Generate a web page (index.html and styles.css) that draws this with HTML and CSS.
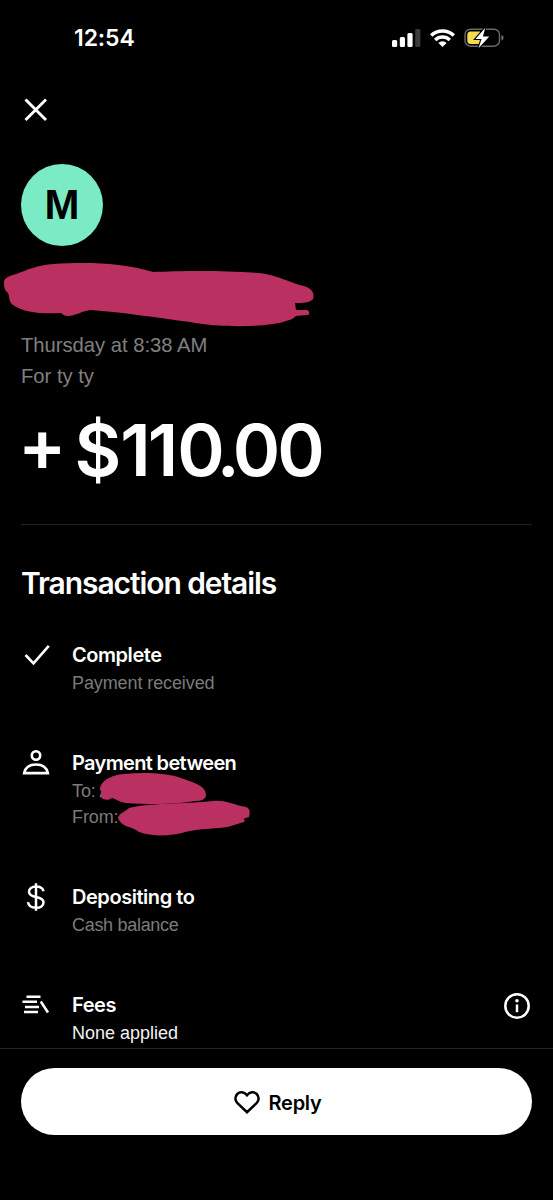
FILE: index.html
```html
<!DOCTYPE html>
<html lang="en">
<head>
<meta charset="utf-8">
<title>Transaction details</title>
<link rel="stylesheet" href="styles.css">
</head>
<body>
<div class="screen">
  <header class="status">
    <span class="time">12:54</span>
    <div class="indicators">
      <svg class="signal" width="29" height="18" viewBox="0 0 29 18"><rect x="0" y="11" width="5.2" height="7" rx="1.5" fill="#fff"/><rect x="7.8" y="8" width="5.2" height="10" rx="1.5" fill="#fff"/><rect x="15.4" y="4" width="5.2" height="14" rx="1.5" fill="#fff"/><rect x="23.2" y="0" width="5.2" height="18" rx="1.5" fill="#3b3b3b"/></svg>
      <svg class="wifi" width="25" height="18" viewBox="0 0 25 18" fill="none" stroke="#fff" stroke-width="3.5"><path d="M1.2 6.5a16.3 16.3 0 0 1 22.6 0M5.2 11a10.6 10.6 0 0 1 14.6 0"/><path d="M12.5 18 8.400 14a5.8 5.8 0 0 1 8.200 0z" fill="#fff" stroke="none"/></svg>
      <svg class="battery" width="40" height="22" viewBox="0 0 40 22"><rect x="1" y="2.2" width="34.5" height="17" rx="5.5" fill="none" stroke="#6b6b6b" stroke-width="1.4"/><path d="M37.5 8v5.600q2-.6 2-2.800t-2-2.800z" fill="#777"/><path d="M6.500 4.500H16V17H6.500Q3.300 17 3.300 13.500V8Q3.300 4.500 6.500 4.500z" fill="#f9d94e"/><path d="M21.300 .8 11.500 12h6l-3 9.200L25.300 9.400h-6.400z" fill="#fff" stroke="#000" stroke-width="2.200" paint-order="stroke"/></svg>
    </div>
  </header>

  <main class="content">
    <svg class="close" width="24" height="24" viewBox="0 0 24 24" fill="none" stroke="#fff" stroke-width="2.900"><path d="M1.500 1.500 22 22M22 1.500 1.500 22"/></svg>
    <div class="avatar">M</div>
    <svg class="redacted-name" width="314" height="65" viewBox="0 0 314 65" fill="#b93061"><path d="M4 21C3 15 9 13 16 11C27 7 37 2 54 1C83-1 122-1 153 9C178 8 220 7 259 10C278 12 290 20 304 23C312 25 315 31 313 36C310 40 303 40 295 40L296 47H307C310 48 310 52 307 52L296 53C292 57 289 57 283 59C267 64 218 65 190 59C153 54 119 49 91 47C82 48 75 53 68 53C65 53 63 52 61 50C41 51 25 50 13 42C8 38 10 34 8 30C5 28 4 24 4 21Z"/></svg>
    <p class="meta date">Thursday at 8:38 AM</p>
    <p class="meta note">For ty ty</p>
    <p class="amount"><span class="plus">+</span><span class="dollar">$</span><span class="ones">11</span><span class="zero">0</span><span class="dot">.</span><span class="zeros">00</span></p>

    <section class="details">
      <h1 class="heading">Transaction details</h1>
      <div class="rows">
        <div class="row">
          <svg class="icon" width="32" height="32" viewBox="0 0 32 32" fill="none" stroke="#fff" stroke-width="2.600"><path d="M5.500 15 13.500 23.400 28.800 5.800"/></svg>
          <div><h2 class="title">Complete</h2><p class="sub">Payment received</p></div>
        </div>
        <div class="row">
          <svg class="icon" width="32" height="32" viewBox="0 0 32 32" fill="none" stroke="#fff" stroke-width="2.600"><circle cx="16" cy="7.500" r="4.200"/><path d="M4.200 25.100c1-5.500 5.500-8.600 11.800-8.600s10.800 3.100 11.800 8.600z"/></svg>
          <div><h2 class="title between">Payment between</h2><p class="sub party">To: A<svg class="redacted-to" width="108" height="32" viewBox="0 0 108 32" fill="#b93061"><path d="M1 18C1 9 12 3 25 2C45 0 69 1 82 6C96 11 107 14 107 23C107 28 101 29 95 29C81 32 55 33 27 31C20 30 17 27 13 26C10 29 3 28 2 25C1 23 5 22 1 18Z"/></svg></p><p class="sub party">From:<svg class="redacted-from" width="133" height="37" viewBox="0 0 133 37" fill="#b93061"><path d="M1 18C3 12 7 13 12 8C28 3 70 4 96 1C108 0 115 4 124 6C132 7 134 9 132 17L126 19C128 19 128 21 127 22C120 24 110 28 102 28C88 29 82 29 68 32C56 36 35 37 22 32C15 26 5 28 1 18Z"/></svg></p></div>
        </div>
        <div class="row">
          <svg class="icon" width="32" height="32" viewBox="0 0 32 32" fill="none" stroke="#fff" stroke-width="2.500"><path d="M23.500 9.200C22.800 6 20 4.600 16 4.600c-4.200 0-7 1.900-7 5.100 0 3.400 3 4.500 7 5.300 4.500.9 7.500 2 7.500 5.400s-3 5.400-7.400 5.400c-4.600 0-7.600-2-8.100-5.700M16 1.300v27.500"/></svg>
          <div><h2 class="title">Depositing to</h2><p class="sub cash">Cash balance</p></div>
        </div>
        <div class="row">
          <svg class="icon" width="32" height="32" viewBox="0 0 32 32" fill="none" stroke="#fff" stroke-width="2.500"><path d="M6.500 6.700h14M2.500 11.700h14.500M5 16.900h14M4 22.100h14M20.800 11.500 28 22.500"/></svg>
          <div class="grow"><h2 class="title">Fees</h2><p class="sub bright">None applied</p></div>
          <svg class="info" width="28" height="28" viewBox="0 0 28 28" fill="none" stroke="#fff" stroke-width="2.500"><circle cx="14" cy="14" r="11.700"/><path d="M14 12.500v7.700"/><circle cx="14" cy="8.800" r="1.800" fill="#fff" stroke="none"/></svg>
        </div>
      </div>
    </section>
  </main>

  <footer class="footer">
    <button class="reply" type="button">
      <svg width="26" height="23" viewBox="0 0 26 23" fill="none" stroke="#000" stroke-width="2.500"><path d="M13 4.200C10.200.7 5.800.5 3.300 3 .8 5.500.7 9.400 3.200 11.900L13 21.200l9.800-9.300c2.500-2.500 2.400-6.400-.1-8.900C20.200.5 15.800.7 13 4.200z"/></svg>
      <span>Reply</span>
    </button>
  </footer>
</div>
</body>
</html>
```

FILE: styles.css
```css
* { box-sizing: border-box; }
body { margin: 0; background: #000; color: #fff; font-family: Inter, "Liberation Sans", sans-serif; }
h1, h2, p { margin: 0; font-weight: 400; }
svg { display: block; flex: none; overflow: visible; }
.screen { display: flex; flex-direction: column; width: 553px; height: 1200px; overflow: hidden; }

.status { display: flex; justify-content: space-between; align-items: center; height: 76px; padding: 0 49px 0 74px; }
.time { font-size: 23px; font-weight: 600; letter-spacing: -0.1px; }
.indicators { display: flex; align-items: center; }
.wifi { margin-left: 9px; }
.battery { margin-left: 9px; }

.content { display: flex; flex-direction: column; height: 972px; padding: 22px 21px 0; }
.close { margin-left: 3px; }
.avatar { display: flex; align-items: center; justify-content: center; width: 82px; height: 82px; margin: 42px 0 17px; border-radius: 50%; background: #7aebc5; color: #000; font: 700 42px "Liberation Sans", sans-serif; }
.redacted-name { margin-left: -21px; }
.meta { height: 31px; line-height: 31px; font-family: "Liberation Sans", sans-serif; font-size: 20.200px; color: #808080; white-space: nowrap; }
.date { margin-top: 2px; }
.amount { display: flex; height: 132px; padding-top: 13px; line-height: 90px; font-size: 72px; font-weight: 600; white-space: nowrap; }
.amount span { letter-spacing: -3px; }
.amount .plus { margin-left: -3px; font-feature-settings: "case"; }
.amount .dollar { margin-left: 11px; }
.amount .ones { margin-left: 2px; }
.amount .zero { margin-left: 2px; letter-spacing: -8px; }
.amount .dot { letter-spacing: -7px; }

.details { border-top: 1px solid #222; padding-top: 38px; }
.heading { height: 40px; line-height: 40px; font-size: 30px; font-weight: 600; letter-spacing: -1.080px; white-space: nowrap; }
.rows { display: flex; flex-direction: column; gap: 52px; margin-top: 37px; }
.row { display: flex; }
.icon { margin: 0 20px 0 -1px; }
.title { height: 30px; line-height: 30px; font-size: 20px; font-weight: 600; letter-spacing: -0.45px; white-space: nowrap; }
.between { letter-spacing: -0.65px; }
.sub { height: 26px; line-height: 26px; font-family: "Liberation Sans", sans-serif; font-size: 18px; letter-spacing: -0.1px; color: #7b7b7b; white-space: nowrap; }
.cash { letter-spacing: -0.3px; }
.party { display: flex; align-items: center; }
.redacted-to { margin: -6px 0 0 -13px; }
.redacted-from { margin: 2px 0 0 -2px; }
.bright { color: #f2f2f2; letter-spacing: 0; }
.grow { flex: 1; }
.info { margin: 2px 1px 0 0; }

.footer { height: 152px; border-top: 1px solid #242424; padding: 19px 21px 0; }
.reply { display: flex; align-items: center; justify-content: center; gap: 9px; width: 100%; height: 67px; border: 0; border-radius: 34px; padding: 2px 0 0 2px; background: #fff; color: #000; font: 600 20px Inter, "Liberation Sans", sans-serif; letter-spacing: -0.3px; }
```
